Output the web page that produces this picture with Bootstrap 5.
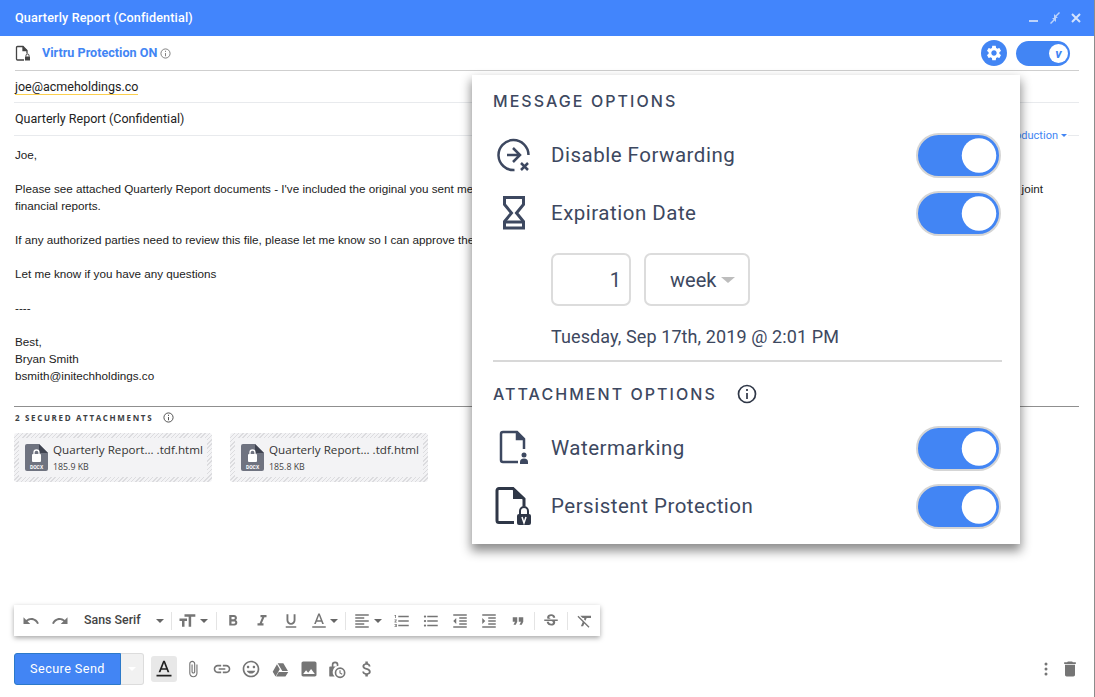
<!DOCTYPE html>
<html lang="en">
<head>
  <meta charset="UTF-8">
  <title>Quarterly Report (Confidential)</title>
  <link href="https://cdn.jsdelivr.net/npm/bootstrap@5.3.0/dist/css/bootstrap.min.css" rel="stylesheet">
  <style>
    html, body { height: 697px; overflow: hidden; background: #fff; }
    body { font-family: Roboto, sans-serif; color: #222; }
    .compose { height: 697px; border-right: 1px solid #8c8c8c; position: relative; }
    .title-bar { height: 36px; background: #4285fc; color: #fff; padding: 0 12px 0 15px; font-size: 12.6px; font-weight: 500; letter-spacing: .15px; }
    .win-btns { gap: 9px; }
    .win-btns svg { display: block; }
    .protect-row { height: 35px; margin: 0 15px 0 15px; border-bottom: 1px solid #cfcfcf; }
    .protect-text { color: #4285f4; font-size: 12.6px; font-weight: 700; margin-left: 11px; }
    .protect-info { margin-left: 3px; }
    .gear-btn { width: 26px; height: 26px; border-radius: 50%; background: #4285f4; margin-right: 9px; }
    .top-toggle { width: 54px; height: 25px; border-radius: 13px; background: #4285f4; padding-right: 1px; margin-right: 9px; }
    .top-knob { width: 19px; height: 19px; margin-right: 1px; border-radius: 50%; background: #fff; color: #4285f4; font-size: 13px; font-weight: 700; font-style: italic; line-height: 19px; text-align: center; }
    .field-row { margin: 0 15px 0 14px; border-bottom: 1px solid #e8eaed; font-size: 12.5px; }
    .to-row { height: 32px; padding-left: 1px; }
    .to-chip { border-bottom: 1px solid #fbcf4e; line-height: 15px; display: inline-block; }
    .subj-row { height: 33px; padding-left: 1px; position: relative; }
    .prod-link { position: absolute; right: 11px; bottom: -8px; background: #fff; color: #4285f4; font-size: 11px; padding: 0 1px; line-height: 15px; gap: 3px; }
    .prod-link .fb-caret { border-left-width: 3px; border-right-width: 3px; border-top: 3px solid #4285f4; }
    .mail-body { margin: 10px 15px 0 15px; font-family: "Liberation Sans", Arial, sans-serif; font-size: 11.7px; line-height: 17px; color: #222; height: 260px; }
    .mail-long { width: 1028px; }
    .attach-head { margin: 0 15px 0 14px; border-top: 1px solid #8f8f8f; padding: 0 0 5px 1px; height: 27px; font-size: 8px; font-weight: 700; letter-spacing: 1.65px; color: #3c4043; font-family: "Open Sans", sans-serif; }
    .attach-info { margin-left: 10px; }
    .attach-list { margin-left: 14px; gap: 18px; }
    .attach-chip { width: 198px; height: 49px; padding: 5px; border-radius: 3px; background: repeating-linear-gradient(135deg, #dcdcdf 0 1px, #f3f3f5 1px 3px); }
    .attach-inner { background: #f3f3f5; height: 39px; padding-left: 6px; }
    .attach-name { font-family: "Open Sans", sans-serif; font-size: 11.65px; color: #333; line-height: 15px; margin-left: 5px; white-space: nowrap; }
    .attach-size { font-family: "Open Sans", sans-serif; font-size: 8.8px; color: #444; line-height: 13px; margin-left: 5px; margin-top: 4px; }
    .format-bar { width: 586px; height: 31px; margin: 123px 0 0 14px; background: #fff; box-shadow: 0 2px 5px rgba(0,0,0,.35); padding-left: 2px; color: #5f6368; }
    .fb-ico { width: 29px; height: 31px; flex: none; }
    .fb-ico svg { fill: #757575; display: block; }
    .fb-font { width: 82px; font-size: 12.4px; font-weight: 500; color: #444; flex: none; padding-left: 10px; white-space: nowrap; }
    .fb-caret { width: 0; height: 0; border-left: 4px solid transparent; border-right: 4px solid transparent; border-top: 4px solid #666; flex: none; }
    .fb-sep { width: 1px; height: 18px; background: #e4e4e4; flex: none; }
    .fb-ico-size { width: 30px; }
    .fb-ico-color { margin-left: -1px; }
    .fb-ico-align { width: 28px; margin-left: 2px; }
    .fb-ico-strike { width: 32px; }
    .fb-ico-clear { width: 34px; }
    .fb-ml-n2 { margin-left: -2px; }
    .fb-ml-n3 { margin-left: -3px; }
    .fb-ml-1 { margin-left: 1px; }
    .fb-ml-2 { margin-left: 2px; }
    .fb-ml-5 { margin-left: 5px; }
    .fb-ml-7 { margin-left: 7px; }
    .fb-ml-8 { margin-left: 8px; }
    .send-row { height: 32px; margin: 17px 0 0 14px; }
    .send-btn { width: 107px; height: 32px; background: #4285f4; color: #fff; border: 1px solid #2c79c9; border-radius: 3px 0 0 3px; font-size: 12.7px; padding: 0; letter-spacing: .4px; }
    .send-drop { width: 23px; height: 32px; background: #f1f1f1; border: 1px solid #dcdcdc; border-left: 0; border-radius: 0 3px 3px 0; }
    .send-drop .fb-caret { border-top-color: #fff; }
    .tool-ico { width: 29px; height: 26px; flex: none; }
    .tool-ico svg { fill: #757575; display: block; }
    .tool-on { width: 26px; background: #e8e8e8; border-radius: 3px; margin-right: 1.5px; margin-left: 7px; }
    .tool-on svg { fill: #222; }
    .tool-end { margin-right: 14px; }
    .tool-trash { width: 20px; }
    .options-panel { position: absolute; left: 472px; top: 75px; width: 548px; height: 469px; background: #fff; box-shadow: 0 6px 10px 1px rgba(0,0,0,.45); padding: 0 19px 0 21px; color: #3d4860; }
    .opt-head { font-family: Inter, sans-serif; font-size: 16px; font-weight: 500; letter-spacing: 2.05px; color: #3d4860; line-height: 20px; white-space: nowrap; }
    .opt-head-top { margin-top: 16px; }
    .opt-row { height: 58px; }
    .opt-row-first { margin-top: 15px; }
    .opt-ico { width: 58px; flex: none; }
    .opt-ico svg { display: block; }
    .opt-label { font-size: 20.5px; letter-spacing: .5px; flex-grow: 1; }
    .form-switch .opt-switch.form-check-input { width: 85px; height: 45px; margin: 0; float: none; flex: none; background-color: #4285f4; border: 2px solid #d5d5d5; border-radius: 23px; background-size: 46px 46px; background-position: right -3px center; box-shadow: none; }
    .form-switch.opt-wrap { padding: 0; min-height: 0; margin: 0; }
    .time-row { margin: 11px 0 0 58px; gap: 13px; }
    .time-box { height: 53px; border: 2px solid #dcdcdc; border-radius: 7px; font-size: 20px; }
    .time-num { width: 80px; padding-right: 8px; }
    .time-unit { width: 106px; padding-left: 24px; gap: 5px; }
    .time-unit .fb-caret { border-left-width: 7px; border-right-width: 7px; border-top: 6px solid #bdbdbd; }
    .time-date { margin: 18px 0 0 58px; font-size: 18px; line-height: 26px; letter-spacing: .1px; white-space: nowrap; }
    .opt-rule { height: 2px; background: #d8d8d8; margin: 10px -1px 0 0; }
    .opt-head-row { margin-top: 22px; }
    .opt-head-info { margin-left: 20px; }
  </style>
</head>
<body>
  <div class="compose">
    <div class="title-bar d-flex align-items-center justify-content-between">
      <span>Quarterly Report (Confidential)</span>
      <div class="win-btns d-flex align-items-center">
        <svg width="12" height="12" viewBox="0 0 12 12"><rect x="1" y="8" width="9" height="2" fill="#bcd3fb"/></svg>
        <svg width="12" height="12" viewBox="0 0 12 12" fill="#bcd3fb"><path d="M1 11l3.500-3.500L3 6h4v4L5.500 8.500 2 12zM11 1L7.500 4.500 9 6H5V2l1.500 1.500L10 0z"/></svg>
        <svg width="12" height="12" viewBox="0 0 12 12" stroke="#d3e2fd" stroke-width="2"><path d="M2 2l8 8M10 2l-8 8"/></svg>
      </div>
    </div>

    <div class="protect-row d-flex align-items-center">
      <svg width="16" height="17" viewBox="0 0 16 17" fill="none" stroke="#444" stroke-width="1.300"><path d="M9 15H2.500A1 1 0 0 1 1.500 14V2.500a1 1 0 0 1 1-1H8l4 4v3"/><path d="M8 1.500v4h4" fill="#444"/><rect x="10" y="11.500" width="5" height="4" fill="#444" stroke="none"/><path d="M11 11.500v-1a1.500 1.500 0 0 1 3 0v1" stroke-width="1"/></svg>
      <span class="protect-text">Virtru Protection ON</span>
      <svg width="11" height="11" viewBox="0 0 12 12" class="protect-info" fill="none" stroke="#777"><circle cx="6" cy="6" r="5"/><path d="M6 5.500v3.500M6 3v1.300"/></svg>
      <div class="ms-auto d-flex align-items-center">
        <div class="gear-btn d-flex align-items-center justify-content-center">
          <svg width="18" height="18" viewBox="0 0 24 24" fill="#fff"><path d="M19.140 12.940c.04-.3.06-.61.06-.94 0-.32-.02-.64-.07-.94l2.030-1.580c.18-.14.23-.41.12-.61l-1.920-3.320c-.12-.22-.37-.29-.59-.22l-2.390.96c-.5-.38-1.030-.7-1.620-.94l-.36-2.540c-.04-.24-.24-.41-.48-.41h-3.840c-.24 0-.43.17-.47.41l-.36 2.540c-.59.24-1.130.57-1.620.94l-2.390-.96c-.22-.08-.47 0-.59.22L2.740 8.870c-.12.21-.08.47.12.61l2.030 1.580c-.05.3-.09.63-.09.94s.02.64.07.94l-2.030 1.580c-.18.14-.23.41-.12.61l1.920 3.320c.12.22.37.29.59.22l2.390-.96c.5.38 1.030.7 1.620.94l.36 2.540c.05.24.24.41.48.41h3.840c.24 0 .44-.17.47-.41l.36-2.540c.59-.24 1.130-.56 1.620-.94l2.390.96c.22.08.47 0 .59-.22l1.920-3.320c.12-.22.07-.47-.12-.61l-2.010-1.580zM12 15.600c-1.980 0-3.600-1.620-3.600-3.600s1.620-3.600 3.600-3.600 3.600 1.620 3.600 3.600-1.620 3.600-3.600 3.600z"/></svg>
        </div>
        <div class="top-toggle d-flex align-items-center justify-content-end"><div class="top-knob">v</div></div>
      </div>
    </div>

    <div class="field-row to-row d-flex align-items-center"><span class="to-chip">joe@acmeholdings.co</span></div>
    <div class="field-row subj-row d-flex align-items-center">
      <span>Quarterly Report (Confidential)</span>
      <span class="prod-link d-flex align-items-center">Production <span class="fb-caret"></span></span>
    </div>

    <div class="mail-body">
      Joe,<br><br>
      <div class="mail-long d-flex justify-content-between"><span>Please see attached Quarterly Report documents - I've included the original you sent me and a revised copy with the updated figures, plus the notes from our last annual board review of the</span><span>joint</span></div>
      financial reports.<br><br>
      If any authorized parties need to review this file, please let me know so I can approve their access.<br><br>
      Let me know if you have any questions<br><br>
      ----<br><br>
      Best,<br>
      Bryan Smith<br>
      bsmith@initechholdings.co
    </div>

    <div class="attach-head d-flex align-items-center">
      <span>2 SECURED ATTACHMENTS</span>
      <svg width="11" height="11" viewBox="0 0 12 12" class="attach-info" fill="none" stroke="#444"><circle cx="6" cy="6" r="5"/><path d="M6 5.500v3.500M6 3v1.300"/></svg>
    </div>

    <div class="attach-list d-flex">
      <div class="attach-chip">
        <div class="attach-inner d-flex align-items-center">
          <svg width="23" height="27" viewBox="0 0 23 27"><path d="M2 0h12l9 9v16a2 2 0 0 1-2 2H2a2 2 0 0 1-2-2V2a2 2 0 0 1 2-2z" fill="#6f7380"/><path d="M14 0l9 9h-9z" fill="#3f4350"/><rect x="7" y="10" width="9" height="8" rx="1" fill="#fff"/><path d="M9 10V8.500a2.500 2.500 0 0 1 5 0V10" fill="none" stroke="#fff" stroke-width="1.300"/><text x="11.500" y="25" font-size="5" font-weight="700" fill="#fff" text-anchor="middle" font-family="Roboto, sans-serif">DOCX</text></svg>
          <div>
            <div class="attach-name">Quarterly Report... .tdf.html</div>
            <div class="attach-size">185.9 KB</div>
          </div>
        </div>
      </div>
      <div class="attach-chip">
        <div class="attach-inner d-flex align-items-center">
          <svg width="23" height="27" viewBox="0 0 23 27"><path d="M2 0h12l9 9v16a2 2 0 0 1-2 2H2a2 2 0 0 1-2-2V2a2 2 0 0 1 2-2z" fill="#6f7380"/><path d="M14 0l9 9h-9z" fill="#3f4350"/><rect x="7" y="10" width="9" height="8" rx="1" fill="#fff"/><path d="M9 10V8.500a2.500 2.500 0 0 1 5 0V10" fill="none" stroke="#fff" stroke-width="1.300"/><text x="11.500" y="25" font-size="5" font-weight="700" fill="#fff" text-anchor="middle" font-family="Roboto, sans-serif">DOCX</text></svg>
          <div>
            <div class="attach-name">Quarterly Report... .tdf.html</div>
            <div class="attach-size">185.8 KB</div>
          </div>
        </div>
      </div>
    </div>

    <div class="format-bar d-flex align-items-center">
      <div class="fb-ico d-flex align-items-center justify-content-center"><svg width="18" height="18" viewBox="0 0 24 24"><path d="M12.500 8c-2.650 0-5.050.99-6.900 2.600L2 7v9h9l-3.620-3.620c1.390-1.160 3.160-1.880 5.120-1.880 3.540 0 6.550 2.310 7.600 5.500l2.370-.78C21.080 11.030 17.150 8 12.500 8z"/></svg></div>
      <div class="fb-ico d-flex align-items-center justify-content-center"><svg width="18" height="18" viewBox="0 0 24 24"><path d="M18.400 10.600C16.550 8.990 14.150 8 11.500 8c-4.650 0-8.580 3.030-9.960 7.220L3.900 16c1.050-3.190 4.050-5.500 7.600-5.500 1.950 0 3.730.72 5.120 1.880L13 16h9V7l-3.600 3.600z"/></svg></div>
      <div class="fb-font">Sans Serif</div>
      <span class="fb-caret"></span>
      <span class="fb-sep fb-ml-7"></span>
      <div class="fb-ico fb-ico-size d-flex align-items-center justify-content-center"><svg width="20" height="20" viewBox="0 0 24 24"><path d="M9 4v3h5v12h3V7h5V4H9zm-6 8h3v7h3v-7h3V9H3v3z"/></svg></div>
      <span class="fb-caret fb-ml-n2"></span>
      <span class="fb-sep fb-ml-8"></span>
      <div class="fb-ico fb-ml-1 d-flex align-items-center justify-content-center"><svg width="18" height="18" viewBox="0 0 24 24"><path d="M15.600 10.790c.97-.67 1.650-1.770 1.650-2.790 0-2.260-1.750-4-4-4H7v14h7.040c2.090 0 3.710-1.700 3.710-3.790 0-1.520-.86-2.820-2.150-3.420zM10 6.500h3c.83 0 1.500.67 1.500 1.500s-.67 1.500-1.500 1.500h-3v-3zm3.500 9H10v-3h3.500c.83 0 1.500.67 1.500 1.500s-.67 1.500-1.500 1.500z"/></svg></div>
      <div class="fb-ico d-flex align-items-center justify-content-center"><svg width="18" height="18" viewBox="0 0 24 24"><path d="M10 4v3h2.210l-3.420 8H6v3h8v-3h-2.210l3.420-8H18V4z"/></svg></div>
      <div class="fb-ico d-flex align-items-center justify-content-center"><svg width="18" height="18" viewBox="0 0 24 24"><path d="M12 17c3.310 0 6-2.690 6-6V3h-2.500v8c0 1.930-1.570 3.500-3.500 3.500S8.500 12.930 8.500 11V3H6v8c0 3.310 2.690 6 6 6zm-7 2v2h14v-2H5z"/></svg></div>
      <div class="fb-ico fb-ico-color d-flex align-items-center justify-content-center"><svg width="18" height="18" viewBox="0 0 24 24"><path d="M11 2L5.500 16h2.250l1.120-3h6.250l1.120 3h2.250L13 2h-2zm-1.380 9L12 4.670 14.380 11H9.620zM3 19h18v2H3z"/></svg></div>
      <span class="fb-caret fb-ml-n3"></span>
      <span class="fb-sep fb-ml-7"></span>
      <div class="fb-ico fb-ico-align d-flex align-items-center justify-content-center"><svg width="18" height="18" viewBox="0 0 24 24"><path d="M15 15H3v2h12v-2zm0-8H3v2h12V7zM3 13h18v-2H3v2zm0 8h18v-2H3v2zM3 3v2h18V3H3z"/></svg></div>
      <span class="fb-caret fb-ml-n2"></span>
      <div class="fb-ico fb-ml-5 d-flex align-items-center justify-content-center"><svg width="18" height="18" viewBox="0 0 24 24"><path d="M2 17h2v.5H3v1h1v.5H2v1h3v-4H2v1zm1-9h1V4H2v1h1v3zm-1 3h1.800L2 13.100v.9h3v-1H3.200L5 10.900V10H2v1zm5-6v2h14V5H7zm0 14h14v-2H7v2zm0-6h14v-2H7v2z"/></svg></div>
      <div class="fb-ico d-flex align-items-center justify-content-center"><svg width="18" height="18" viewBox="0 0 24 24"><path d="M4 10.500c-.83 0-1.500.67-1.500 1.500s.67 1.500 1.500 1.500 1.500-.67 1.500-1.500-.67-1.500-1.500-1.500zm0-6c-.83 0-1.500.67-1.500 1.500S3.170 7.500 4 7.500 5.500 6.830 5.500 6 4.830 4.500 4 4.500zm0 12c-.83 0-1.500.68-1.500 1.500s.68 1.500 1.500 1.500 1.500-.68 1.500-1.500-.67-1.500-1.500-1.500zM7 19h14v-2H7v2zm0-6h14v-2H7v2zm0-8v2h14V5H7z"/></svg></div>
      <div class="fb-ico d-flex align-items-center justify-content-center"><svg width="18" height="18" viewBox="0 0 24 24"><path d="M11 17h10v-2H11v2zm-8-5l4 4V8l-4 4zm0 9h18v-2H3v2zM3 3v2h18V3H3zm8 6h10V7H11v2zm0 4h10v-2H11v2z"/></svg></div>
      <div class="fb-ico d-flex align-items-center justify-content-center"><svg width="18" height="18" viewBox="0 0 24 24"><path d="M3 21h18v-2H3v2zM3 8v8l4-4-4-4zm8 9h10v-2H11v2zM3 3v2h18V3H3zm8 6h10V7H11v2zm0 4h10v-2H11v2z"/></svg></div>
      <div class="fb-ico d-flex align-items-center justify-content-center"><svg width="18" height="18" viewBox="0 0 24 24"><path d="M6 17h3l2-4V7H5v6h3zm8 0h3l2-4V7h-6v6h3z"/></svg></div>
      <span class="fb-sep fb-ml-2"></span>
      <div class="fb-ico fb-ico-strike d-flex align-items-center justify-content-center"><svg width="18" height="18" viewBox="0 0 24 24"><path d="M6.850 7.080C6.850 4.370 9.450 3 12.240 3c1.640 0 3 .49 3.900 1.280.77.65 1.460 1.730 1.460 3.240h-3.010c0-.31-.05-.59-.15-.85-.29-.86-1.200-1.280-2.250-1.280-1.860 0-2.340 1.020-2.340 1.700 0 .48.25.88.74 1.210.38.25.77.48 1.410.7H7.390c-.21-.34-.54-.89-.54-1.920zM21 12v-2H3v2h9.620c1.150.45 1.960.75 1.960 1.970 0 1-.81 1.670-2.280 1.670-1.540 0-2.930-.54-2.930-2.510H6.400c0 .55.08 1.130.24 1.580.81 2.290 3.290 3.300 5.670 3.300 2.270 0 5.300-.89 5.300-4.050 0-.3-.01-1.160-.48-1.940H21V12z"/></svg></div>
      <span class="fb-sep"></span>
      <div class="fb-ico fb-ico-clear d-flex align-items-center justify-content-center"><svg width="18" height="18" viewBox="0 0 24 24"><path d="M3.270 5L2 6.270l6.970 6.970L6.500 19h3l1.570-3.660L16.730 21 18 19.730 3.550 5.270 3.270 5zM6 5v.18L8.820 8h2.400l-.72 1.680 2.100 2.100L14.210 8H20V5H6z"/></svg></div>
    </div>

    <div class="send-row d-flex align-items-center">
      <button class="btn send-btn">Secure Send</button>
      <div class="send-drop d-flex align-items-center justify-content-center"><span class="fb-caret"></span></div>
      <div class="tool-ico tool-on d-flex align-items-center justify-content-center"><svg width="20" height="20" viewBox="0 0 24 24"><path d="M11 2L5.500 16h2.250l1.120-3h6.250l1.120 3h2.250L13 2h-2zm-1.380 9L12 4.670 14.380 11H9.620zM3 19h18v2H3z"/></svg></div>
      <div class="tool-ico d-flex align-items-center justify-content-center"><svg width="18" height="18" viewBox="0 0 24 24"><path d="M16.500 6v11.500c0 2.210-1.790 4-4 4s-4-1.790-4-4V5c0-1.380 1.120-2.500 2.500-2.500s2.500 1.120 2.500 2.500v10.500c0 .55-.45 1-1 1s-1-.45-1-1V6H10v9.500c0 1.380 1.120 2.500 2.500 2.500s2.500-1.120 2.500-2.500V5c0-2.210-1.790-4-4-4S7 2.790 7 5v12.500c0 3.040 2.460 5.500 5.500 5.500s5.500-2.460 5.500-5.500V6h-1.500z"/></svg></div>
      <div class="tool-ico d-flex align-items-center justify-content-center"><svg width="20" height="20" viewBox="0 0 24 24"><path d="M3.900 12c0-1.710 1.390-3.100 3.100-3.100h4V7H7c-2.760 0-5 2.240-5 5s2.240 5 5 5h4v-1.900H7c-1.710 0-3.100-1.390-3.100-3.100zM8 13h8v-2H8v2zm9-6h-4v1.900h4c1.710 0 3.100 1.390 3.100 3.100s-1.390 3.100-3.100 3.100h-4V17h4c2.760 0 5-2.240 5-5s-2.240-5-5-5z"/></svg></div>
      <div class="tool-ico d-flex align-items-center justify-content-center"><svg width="20" height="20" viewBox="0 0 24 24"><path d="M11.990 2C6.470 2 2 6.480 2 12s4.470 10 9.990 10C17.520 22 22 17.520 22 12S17.520 2 11.990 2zM12 20c-4.420 0-8-3.580-8-8s3.580-8 8-8 8 3.580 8 8-3.580 8-8 8zm3.500-9c.83 0 1.500-.67 1.500-1.500S16.330 8 15.500 8 14 8.670 14 9.500s.67 1.500 1.500 1.500zm-7 0c.83 0 1.500-.67 1.500-1.500S9.330 8 8.500 8 7 8.670 7 9.500 7.670 11 8.500 11zm3.500 6.500c2.330 0 4.310-1.460 5.110-3.500H6.890c.8 2.040 2.780 3.500 5.110 3.500z"/></svg></div>
      <div class="tool-ico d-flex align-items-center justify-content-center"><svg width="17" height="17" viewBox="0 0 24 24"><path d="M8 3h8l6.500 11h-8zM7 4.500l4 7-6 10.500-4-7zM9.500 15.500H23l-4 6.500H5.800z"/></svg></div>
      <div class="tool-ico d-flex align-items-center justify-content-center"><svg width="20" height="20" viewBox="0 0 24 24"><path d="M21 19V5c0-1.100-.9-2-2-2H5c-1.100 0-2 .9-2 2v14c0 1.100.9 2 2 2h14c1.100 0 2-.9 2-2zM8.500 13.500l2.500 3.010L14.500 12l4.500 6H5l3.500-4.500z"/></svg></div>
      <div class="tool-ico d-flex align-items-center justify-content-center"><svg width="20" height="20" viewBox="1.500 0 24 24"><path d="M4 9h2V7a4 4 0 0 1 8 0v1.200A7.500 7.500 0 0 0 9.400 21H4a1 1 0 0 1-1-1V10a1 1 0 0 1 1-1zm4-2v2h4V7a2 2 0 0 0-4 0z"/><path fill-rule="evenodd" d="M16 10a6.500 6.500 0 1 1 0 13 6.500 6.500 0 0 1 0-13zm0 2a4.500 4.500 0 1 0 0 9 4.500 4.500 0 0 0 0-9zm-.8 1.500h1.400v3l2.300 1.300-.7 1.100-3-1.700z"/></svg></div>
      <div class="tool-ico d-flex align-items-center justify-content-center"><svg width="20" height="20" viewBox="0 0 24 24"><path d="M11.800 10.900c-2.270-.59-3-1.200-3-2.150 0-1.090 1.010-1.850 2.700-1.850 1.780 0 2.440.85 2.500 2.100h2.210c-.07-1.720-1.120-3.300-3.210-3.810V3h-3v2.160c-1.940.42-3.500 1.680-3.500 3.610 0 2.310 1.910 3.460 4.700 4.130 2.500.6 3 1.480 3 2.410 0 .69-.49 1.790-2.700 1.790-2.060 0-2.870-.92-2.980-2.100h-2.200c.12 2.190 1.760 3.420 3.680 3.830V21h3v-2.150c1.950-.37 3.500-1.500 3.500-3.550 0-2.840-2.430-3.810-4.700-4.400z"/></svg></div>
      <div class="tool-end ms-auto d-flex align-items-center">
        <div class="tool-ico d-flex align-items-center justify-content-center"><svg width="4" height="14" viewBox="0 0 4 14"><circle cx="2" cy="2" r="1.500"/><circle cx="2" cy="7" r="1.500"/><circle cx="2" cy="12" r="1.500"/></svg></div>
        <div class="tool-ico tool-trash d-flex align-items-center justify-content-center"><svg width="20" height="20" viewBox="0 0 24 24"><path d="M6 19c0 1.100.9 2 2 2h8c1.100 0 2-.9 2-2V7H6v12zM19 4h-3.500l-1-1h-5l-1 1H5v2h14V4z"/></svg></div>
      </div>
    </div>

    <div class="options-panel">
      <div class="opt-head opt-head-top">MESSAGE OPTIONS</div>
      <div class="opt-row opt-row-first d-flex align-items-center">
        <div class="opt-ico"><svg width="38" height="38" viewBox="0 0 38 38" fill="none" stroke="#3d4860" stroke-width="2.500"><path d="M35.500 19A15 15 0 1 0 21.500 34"/><path d="M14 19h13M20 12l7 7-7 7"/><path d="M28 27l7 7M35 27l-7 7"/></svg></div>
        <div class="opt-label">Disable Forwarding</div>
        <div class="form-check form-switch opt-wrap"><input class="form-check-input opt-switch" type="checkbox" checked></div>
      </div>
      <div class="opt-row d-flex align-items-center">
        <div class="opt-ico"><svg width="38" height="36" viewBox="0 0 38 36" fill="none" stroke="#3d4860" stroke-width="3"><path d="M11.500 2.500h19v7l-7 8.500 7 8.500v6.500h-19v-6.500l7-8.500-7-8.500z"/><path d="M12 27h18"/></svg></div>
        <div class="opt-label">Expiration Date</div>
        <div class="form-check form-switch opt-wrap"><input class="form-check-input opt-switch" type="checkbox" checked></div>
      </div>
      <div class="time-row d-flex">
        <div class="time-box time-num d-flex align-items-center justify-content-end">1</div>
        <div class="time-box time-unit d-flex align-items-center">week <span class="fb-caret"></span></div>
      </div>
      <div class="time-date">Tuesday, Sep 17th, 2019 @ 2:01 PM</div>
      <div class="opt-rule"></div>
      <div class="opt-head-row d-flex align-items-center">
        <div class="opt-head">ATTACHMENT OPTIONS</div>
        <svg width="20" height="20" viewBox="0 0 20 20" class="opt-head-info" fill="none" stroke="#2f3747" stroke-width="1.700"><circle cx="10" cy="10" r="8.500"/><path d="M10 9v6M10 5v2"/></svg>
      </div>
      <div class="opt-row opt-row-first d-flex align-items-center">
        <div class="opt-ico"><svg width="38" height="36" viewBox="0 0 38 36" fill="none" stroke="#3d4860" stroke-width="2.500"><path d="M31 19V9l-7-7H10a2 2 0 0 0-2 2v26a2 2 0 0 0 2 2h15"/><path d="M24 2v7h7" fill="#3d4860"/><circle cx="31" cy="25" r="2.500" fill="#3d4860" stroke="none"/><path d="M27 34v-2a4 3.500 0 0 1 8 0v2z" fill="#3d4860" stroke="none"/></svg></div>
        <div class="opt-label">Watermarking</div>
        <div class="form-check form-switch opt-wrap"><input class="form-check-input opt-switch" type="checkbox" checked></div>
      </div>
      <div class="opt-row d-flex align-items-center">
        <div class="opt-ico"><svg width="38" height="40" viewBox="0 0 38 40" fill="none" stroke="#2f3747" stroke-width="3"><path d="M31 20V13L20 2.500H6a2 2 0 0 0-2 2v30a2 2 0 0 0 2 2h15"/><path d="M20 2l12 11H20z" fill="#2f3747" stroke="none"/><rect x="24" y="28" width="14" height="11" rx="2" fill="#2f3747" stroke="none"/><path d="M27 28v-3a4 4 0 0 1 8 0v3" stroke-width="2"/><path d="M29 31l2 6 2-6" stroke="#fff" stroke-width="1.500"/></svg></div>
        <div class="opt-label">Persistent Protection</div>
        <div class="form-check form-switch opt-wrap"><input class="form-check-input opt-switch" type="checkbox" checked></div>
      </div>
    </div>
  </div>
  <script src="https://cdn.jsdelivr.net/npm/bootstrap@5.3.0/dist/js/bootstrap.bundle.min.js"></script>
</body>
</html>
